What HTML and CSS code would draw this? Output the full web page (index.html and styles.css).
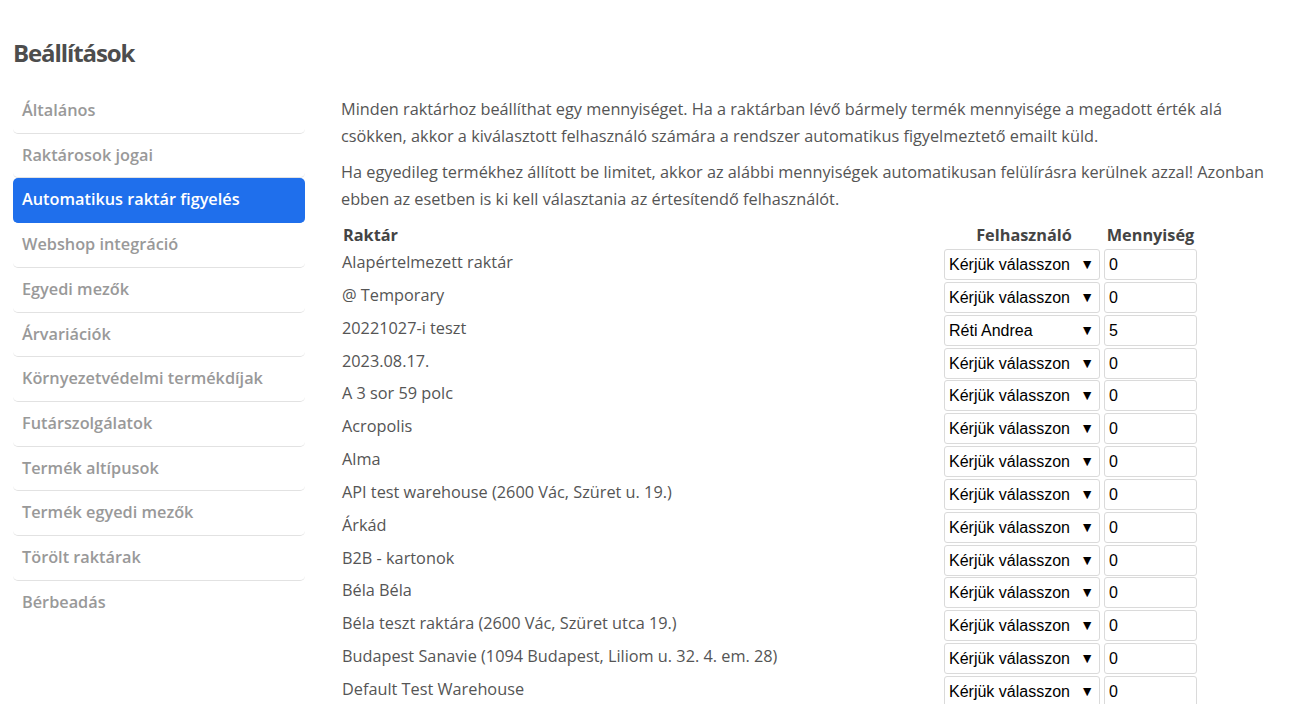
FILE: index.html
```html
<!DOCTYPE html>
<html lang="hu">
<head>
<meta charset="utf-8">
<title>Beállítások</title>
<link rel="stylesheet" href="styles.css">
</head>
<body>
<div class="page">
  <h1 class="title">Beállítások</h1>
  <div class="layout">
    <nav class="sidebar">
      <a class="nav-item">Általános</a>
      <a class="nav-item">Raktárosok jogai</a>
      <a class="nav-item active">Automatikus raktár figyelés</a>
      <a class="nav-item">Webshop integráció</a>
      <a class="nav-item">Egyedi mezők</a>
      <a class="nav-item">Árvariációk</a>
      <a class="nav-item">Környezetvédelmi termékdíjak</a>
      <a class="nav-item">Futárszolgálatok</a>
      <a class="nav-item">Termék altípusok</a>
      <a class="nav-item">Termék egyedi mezők</a>
      <a class="nav-item">Törölt raktárak</a>
      <a class="nav-item">Bérbeadás</a>
    </nav>
    <main class="content">
      <p class="intro">Minden raktárhoz beállíthat egy mennyiséget. Ha a raktárban lévő bármely termék mennyisége a megadott érték alá csökken, akkor a kiválasztott felhasználó számára a rendszer automatikus figyelmeztető emailt küld.</p>
      <p class="intro">Ha egyedileg termékhez állított be limitet, akkor az alábbi mennyiségek automatikusan felülírásra kerülnek azzal! Azonban ebben az esetben is ki kell választania az értesítendő felhasználót.</p>
      <table class="stock-table">
        <thead>
          <tr>
            <th class="col-name">Raktár</th>
            <th class="col-user">Felhasználó</th>
            <th class="col-qty">Mennyiség</th>
          </tr>
        </thead>
        <tbody>
          <tr><td>Alapértelmezett raktár</td><td class="cell-user"><span class="sel">Kérjük válasszon</span></td><td><span class="qty">0</span></td></tr>
          <tr><td>@ Temporary</td><td class="cell-user"><span class="sel">Kérjük válasszon</span></td><td><span class="qty">0</span></td></tr>
          <tr><td>20221027-i teszt</td><td class="cell-user"><span class="sel">Réti Andrea</span></td><td><span class="qty">5</span></td></tr>
          <tr><td>2023.08.17.</td><td class="cell-user"><span class="sel">Kérjük válasszon</span></td><td><span class="qty">0</span></td></tr>
          <tr><td>A 3 sor 59 polc</td><td class="cell-user"><span class="sel">Kérjük válasszon</span></td><td><span class="qty">0</span></td></tr>
          <tr><td>Acropolis</td><td class="cell-user"><span class="sel">Kérjük válasszon</span></td><td><span class="qty">0</span></td></tr>
          <tr><td>Alma</td><td class="cell-user"><span class="sel">Kérjük válasszon</span></td><td><span class="qty">0</span></td></tr>
          <tr><td>API test warehouse (2600 Vác, Szüret u. 19.)</td><td class="cell-user"><span class="sel">Kérjük válasszon</span></td><td><span class="qty">0</span></td></tr>
          <tr><td>Árkád</td><td class="cell-user"><span class="sel">Kérjük válasszon</span></td><td><span class="qty">0</span></td></tr>
          <tr><td>B2B - kartonok</td><td class="cell-user"><span class="sel">Kérjük válasszon</span></td><td><span class="qty">0</span></td></tr>
          <tr><td>Béla Béla</td><td class="cell-user"><span class="sel">Kérjük válasszon</span></td><td><span class="qty">0</span></td></tr>
          <tr><td>Béla teszt raktára (2600 Vác, Szüret utca 19.)</td><td class="cell-user"><span class="sel">Kérjük válasszon</span></td><td><span class="qty">0</span></td></tr>
          <tr><td>Budapest Sanavie (1094 Budapest, Liliom u. 32. 4. em. 28)</td><td class="cell-user"><span class="sel">Kérjük válasszon</span></td><td><span class="qty">0</span></td></tr>
          <tr><td>Default Test Warehouse</td><td class="cell-user"><span class="sel">Kérjük válasszon</span></td><td><span class="qty">0</span></td></tr>
        </tbody>
      </table>
    </main>
  </div>
</div>
</body>
</html>
```
FILE: styles.css
```css
html, body {
  margin: 0;
  padding: 0;
  background: #fff;
}
body {
  font-family: "Open Sans", "Noto Sans", sans-serif;
  font-size: 16.3px;
  color: #555;
  overflow: hidden;
}
.page {
  padding: 0 31px 0 13px;
}
.title {
  margin: 0;
  padding-top: 37px;
  font-size: 24px;
  line-height: 32px;
  font-weight: 700;
  color: #4d4d4d;
  letter-spacing: -1.1px;
}
.layout {
  display: grid;
  grid-template-columns: 292px 1fr;
  column-gap: 36px;
  margin-top: 19px;
}
.sidebar {
  display: flex;
  flex-direction: column;
  padding-top: 1px;
}
.nav-item {
  display: block;
  padding: 10px 9px;
  line-height: 23.7px;
  font-weight: 600;
  color: #999;
  border-bottom: 1px solid #e2e2e2;
  border-radius: 5px;
  white-space: nowrap;
}
.nav-item:last-child {
  border-bottom: none;
}
.nav-item.active {
  background: #1f6fec;
  color: #fff;
  border-bottom-color: #1f6fec;
}
.content {
  padding-top: 8px;
}
.intro {
  margin: 0 0 9px 0;
  line-height: 27px;
}
.stock-table {
  border-collapse: collapse;
  width: 856px;
  margin-top: 9px;
}
.stock-table th {
  font-weight: 700;
  color: #444;
  height: 26px;
  padding: 0;
  line-height: 26px;
}
.stock-table th.col-name {
  text-align: left;
  padding-left: 2px;
}
.stock-table th.col-user {
  width: 160px;
  text-align: center;
}
.stock-table th.col-qty {
  width: 93px;
  text-align: center;
}
.stock-table td {
  padding: 1px 0 0.85px 0;
  height: 31px;
  line-height: 26px;
  vertical-align: top;
}
.stock-table td:first-child {
  padding-left: 1px;
}
.cell-user {
  padding-right: 4px !important;
}
.sel {
  position: relative;
  display: block;
  box-sizing: border-box;
  width: 156px;
  height: 31px;
  border: 1px solid #dadada;
  border-radius: 3px;
  padding: 0 4px;
  font-family: "Liberation Sans", Arial, sans-serif;
  font-size: 16px;
  line-height: 29px;
  color: #000;
}
.sel::after {
  content: "▼";
  position: absolute;
  right: 5px;
  top: 0;
  font-size: 14px;
  line-height: 28px;
  color: #000;
}
.qty {
  display: block;
  box-sizing: border-box;
  width: 93px;
  height: 31px;
  border: 1px solid #dadada;
  border-radius: 3px;
  padding: 0 4px;
  font-family: "Liberation Sans", Arial, sans-serif;
  font-size: 16px;
  line-height: 29px;
  color: #000;
}
```
